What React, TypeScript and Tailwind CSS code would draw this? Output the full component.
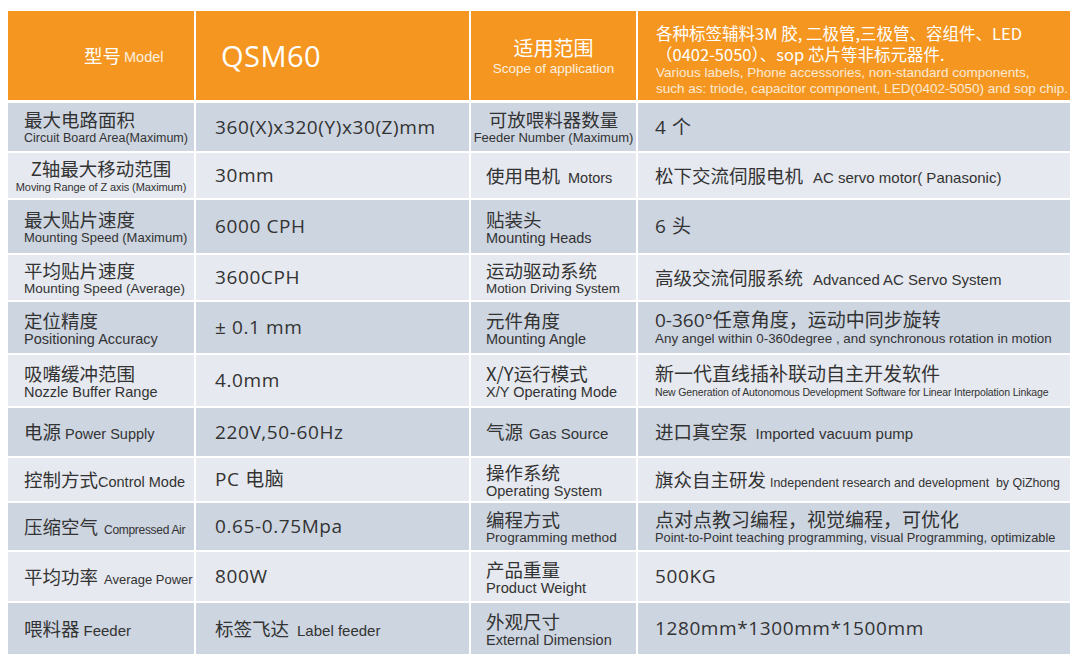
import type { ReactNode } from "react";

const zh = "font-['Noto_Sans_CJK_SC','Noto_Sans',sans-serif]";
const en = "font-['Liberation_Sans',Arial,sans-serif]";
const num = "font-['Open_Sans','Noto_Sans_CJK_SC',sans-serif]";

type Row = {
  h: string;
  dark: boolean;
  a: ReactNode;
  b: ReactNode;
  c: ReactNode;
  d: ReactNode;
};

function Two({ top, bottom, s, center }: { top: string; bottom: string; s: string; center?: boolean }) {
  return (
    <div className={center ? "flex flex-col items-center" : "flex flex-col"}>
      <span className={`${zh} text-[18.5px] leading-[22px] whitespace-nowrap`}>{top}</span>
      <span className={`${en} ${s} leading-[16px] whitespace-nowrap`}>{bottom}</span>
    </div>
  );
}

function Inline({ top, bottom, s, gap = "ml-[4px]" }: { top: string; bottom: string; s: string; gap?: string }) {
  return (
    <div className="flex items-baseline whitespace-pre">
      <span className={`${zh} text-[18.5px]`}>{top}</span>
      <span className={`${en} ${s} ${gap}`}>{bottom}</span>
    </div>
  );
}

function Val({ children }: { children: ReactNode }) {
  return <span className={`${num} text-[19px] tracking-[0.6px] whitespace-nowrap`}>{children}</span>;
}

const rows: Row[] = [
  {
    h: "h-[48px]",
    dark: true,
    a: <Two top="最大电路面积" bottom="Circuit Board Area(Maximum)" s="text-[12.5px]" />,
    b: <Val>360(X)x320(Y)x30(Z)mm</Val>,
    c: <Two top="可放喂料器数量" bottom="Feeder Number (Maximum)" s="text-[13px]" center />,
    d: <Val>4 个</Val>,
  },
  {
    h: "h-[45px]",
    dark: false,
    a: <Two top="Z轴最大移动范围" bottom="Moving Range of Z axis (Maximum)" s="text-[11px] tracking-[-0.1px]" center />,
    b: <Val>30mm</Val>,
    c: <Inline top="使用电机" bottom="Motors" s="text-[14.5px]" gap="ml-[8px]" />,
    d: <Inline top="松下交流伺服电机" bottom="AC servo motor( Panasonic)" s="text-[15px]" gap="ml-[10px]" />,
  },
  {
    h: "h-[53px]",
    dark: true,
    a: <Two top="最大贴片速度" bottom="Mounting Speed (Maximum)" s="text-[13px]" />,
    b: <Val>6000 CPH</Val>,
    c: <Two top="贴装头" bottom="Mounting Heads" s="text-[14.5px]" />,
    d: <Val>6 头</Val>,
  },
  {
    h: "h-[45px]",
    dark: false,
    a: <Two top="平均贴片速度" bottom="Mounting Speed (Average)" s="text-[13.5px]" />,
    b: <Val>3600CPH</Val>,
    c: <Two top="运动驱动系统" bottom="Motion Driving System" s="text-[13.4px]" />,
    d: <Inline top="高级交流伺服系统" bottom="Advanced AC Servo System" s="text-[15px]" gap="ml-[10px]" />,
  },
  {
    h: "h-[51px]",
    dark: true,
    a: <Two top="定位精度" bottom="Positioning Accuracy" s="text-[14.5px]" />,
    b: <Val>± 0.1 mm</Val>,
    c: <Two top="元件角度" bottom="Mounting Angle" s="text-[14.5px]" />,
    d: (
      <div className="flex flex-col">
        <span className={`${num} text-[19px] leading-[22px] whitespace-nowrap`}>0-360°任意角度，运动中同步旋转</span>
        <span className={`${en} text-[13.4px] leading-[16px] whitespace-nowrap`}>
          Any angel within 0-360degree , and synchronous rotation in motion
        </span>
      </div>
    ),
  },
  {
    h: "h-[51px]",
    dark: false,
    a: <Two top="吸嘴缓冲范围" bottom="Nozzle Buffer Range" s="text-[14.5px]" />,
    b: <Val>4.0mm</Val>,
    c: <Two top="X/Y运行模式" bottom="X/Y Operating Mode" s="text-[14.5px]" />,
    d: (
      <div className="flex flex-col">
        <span className={`${zh} text-[19px] leading-[23px] whitespace-nowrap`}>新一代直线插补联动自主开发软件</span>
        <span className={`${en} text-[10.5px] leading-[16px] tracking-[-0.15px] whitespace-nowrap`}>
          New Generation of Autonomous Development Software for Linear Interpolation Linkage
        </span>
      </div>
    ),
  },
  {
    h: "h-[48px]",
    dark: true,
    a: <Inline top="电源" bottom="Power Supply" s="text-[14.5px]" />,
    b: <Val>220V,50-60Hz</Val>,
    c: <Inline top="气源" bottom="Gas Source" s="text-[15px]" gap="ml-[6px]" />,
    d: <Inline top="进口真空泵" bottom="Imported vacuum pump" s="text-[15px]" gap="ml-[8px]" />,
  },
  {
    h: "h-[43px]",
    dark: false,
    a: <Inline top="控制方式" bottom="Control Mode" s="text-[14.5px]" gap="ml-0" />,
    b: <Val>PC 电脑</Val>,
    c: <Two top="操作系统" bottom="Operating System" s="text-[14.5px]" />,
    d: <Inline top="旗众自主研发" bottom="Independent research and development  by QiZhong" s="text-[12.4px]" gap="ml-[4px]" />,
  },
  {
    h: "h-[47px]",
    dark: true,
    a: <Inline top="压缩空气" bottom="Compressed Air" s="text-[12px] tracking-[-0.3px]" gap="ml-[6px]" />,
    b: <Val>0.65-0.75Mpa</Val>,
    c: <Two top="编程方式" bottom="Programming method" s="text-[13.6px]" />,
    d: (
      <div className="flex flex-col">
        <span className={`${zh} text-[19px] leading-[22px] whitespace-nowrap`}>点对点教习编程，视觉编程，可优化</span>
        <span className={`${en} text-[12.8px] leading-[16px] whitespace-nowrap`}>
          Point-to-Point teaching programming, visual Programming, optimizable
        </span>
      </div>
    ),
  },
  {
    h: "h-[49px]",
    dark: false,
    a: <Inline top="平均功率" bottom="Average Power" s="text-[13px]" gap="ml-[6px]" />,
    b: <Val>800W</Val>,
    c: <Two top="产品重量" bottom="Product Weight" s="text-[14.7px]" />,
    d: <Val>500KG</Val>,
  },
  {
    h: "h-[51px]",
    dark: true,
    a: <Inline top="喂料器" bottom="Feeder" s="text-[15px]" gap="ml-[4px]" />,
    b: <Inline top="标签飞达" bottom="Label feeder" s="text-[15px]" gap="ml-[8px]" />,
    c: <Two top="外观尺寸" bottom="External Dimension" s="text-[14.5px]" />,
    d: <Val>1280mm*1300mm*1500mm</Val>,
  },
];

export default function App() {
  return (
    <div className="w-[1080px] h-[658px] bg-white pt-[11px] pl-[8px] text-[#333333]">
      <div className="grid grid-cols-[186px_273px_165px_432px] gap-x-[2px] w-[1062px]">
        {/* header */}
        <div className="h-[89px] bg-[#f4961f] flex items-center pl-[76px] text-white">
          <span className={`${zh} text-[18.5px]`}>型号</span>
          <span className={`${en} text-[14.5px] ml-[3px] mt-[5px] text-white/85`}>Model</span>
        </div>
        <div className="h-[89px] bg-[#f4961f] flex items-center pl-[25px] text-white">
          <span className={`${num} text-[29px] tracking-[0.5px]`}>QSM60</span>
        </div>
        <div className="h-[89px] bg-[#f4961f] flex flex-col items-center justify-center text-white pt-[2px]">
          <span className={`${zh} text-[20px] leading-[24px]`}>适用范围</span>
          <span className={`${en} text-[13.5px] leading-[17px] text-white/85`}>Scope of application</span>
        </div>
        <div className="h-[89px] bg-[#f4961f] flex flex-col justify-center pl-[18px] pt-[8px] text-white">
          <span className={`${zh} text-[16.5px] leading-[21px] whitespace-nowrap`}>各种标签辅料3M 胶, 二极管,三极管、容组件、LED</span>
          <span className={`${zh} text-[16.5px] leading-[21px] whitespace-nowrap`}>（0402-5050）、sop 芯片等非标元器件.</span>
          <span className={`${en} text-[13.5px] leading-[16px] text-white/80 whitespace-nowrap`}>
            Various labels, Phone accessories, non-standard components,
          </span>
          <span className={`${en} text-[13.5px] leading-[16px] text-white/80 whitespace-nowrap`}>
            such as: triode, capacitor component, LED(0402-5050) and sop chip.
          </span>
        </div>
      </div>

      <div className="mt-[3px] flex flex-col gap-y-[2px] w-[1062px]">
        {rows.map((r, i) => {
          const bg = r.dark ? "bg-[#cdd5e1]" : "bg-[#e6e9ef]";
          return (
            <div key={i} className={`grid grid-cols-[186px_273px_165px_432px] gap-x-[2px] ${r.h}`}>
              <div className={`${bg} flex items-center ${i === 1 ? "justify-center" : "pl-[16px]"}`}>{r.a}</div>
              <div className={`${bg} flex items-center pl-[19px]`}>{r.b}</div>
              <div className={`${bg} flex items-center ${i === 0 ? "justify-center" : "pl-[15px]"}`}>{r.c}</div>
              <div className={`${bg} flex items-center pl-[17px]`}>{r.d}</div>
            </div>
          );
        })}
      </div>
    </div>
  );
}
